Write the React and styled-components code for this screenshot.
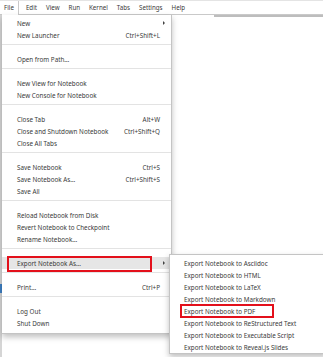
import styled, { createGlobalStyle } from 'styled-components';

const GlobalStyle = createGlobalStyle`
  html, body {
    margin: 0;
    padding: 0;
    background: #ffffff;
    overflow: hidden;
  }
  body {
    font-family: 'Noto Sans', 'Liberation Sans', Arial, sans-serif;
    color: #3a3a3a;
  }
`;

const Page = styled.div`
  position: relative;
  width: 323px;
  height: 357px;
  overflow: hidden;
  background: #ffffff;
`;

const MenuBar = styled.div`
  display: flex;
  align-items: stretch;
  height: 13px;
  border-top: 1px solid #e4e4e4;
  border-bottom: 1px solid #c9c9c9;
  font-size: 6.2px;
  line-height: 13px;
`;

const BarItem = styled.div`
  padding: ${(p) => (p.$active ? '0 4px 0 2px' : '0 4.5px')};
  margin-left: ${(p) => (p.$active ? '2px' : '0')};
  margin-right: ${(p) => (p.$active ? '2.5px' : '0')};
  border-right: ${(p) => (p.$active ? '1px solid #c9c9c9' : 'none')};
  background: #ffffff;
  margin-bottom: ${(p) => (p.$active ? '-1px' : '0')};
  white-space: nowrap;
`;

const Workspace = styled.div`
  display: flex;
  height: 343px;
`;

const SideStrip = styled.div`
  width: 2px;
  background: #d5d5d5;
  display: flex;
  flex-direction: column;
`;

const SideMark = styled.div`
  margin-top: 269px;
  height: 9px;
  background: #3d7fc4;
`;

const MainArea = styled.div`
  flex: 1;
  position: relative;
`;

const TabLine = styled.div`
  margin-left: 212px;
  height: 2px;
  background: #bdbdbd;
`;

const Dropdown = styled.div`
  position: absolute;
  left: 0;
  top: 0;
  width: 169px;
  background: #ffffff;
  border-right: 1px solid #c4c4c4;
  border-bottom: 1px solid #c4c4c4;
  box-shadow: 0 3px 6px rgba(0, 0, 0, 0.25);
  padding: 2px 0 4px;
  font-size: 6.3px;
`;

const Item = styled.div`
  position: relative;
  display: flex;
  align-items: center;
  justify-content: space-between;
  height: 12px;
  padding: 0 11px 0 15px;
  background: ${(p) => (p.$active ? '#e6e6e6' : 'transparent')};
  white-space: nowrap;
`;

const Shortcut = styled.span`
  color: #3a3a3a;
`;

const Arrow = styled.span`
  width: 0;
  height: 0;
  margin-right: -5px;
  border-left: 2.5px solid #444444;
  border-top: 2px solid transparent;
  border-bottom: 2px solid transparent;
`;

const Separator = styled.div`
  height: 1px;
  background: #e3e3e3;
  margin: 3px 0 8px;
`;

const Submenu = styled.div`
  position: absolute;
  left: 167px;
  top: -3px;
  width: 156px;
  background: #ffffff;
  border: 1px solid #c4c4c4;
  box-shadow: 0 3px 6px rgba(0, 0, 0, 0.25);
  padding: 2px 0 0;
  z-index: 2;
`;

const SubItem = styled.div`
  position: relative;
  display: flex;
  align-items: center;
  height: 12px;
  padding-left: 14px;
  white-space: nowrap;
`;

const RedBox = styled.div`
  position: absolute;
  left: ${(p) => p.$left}px;
  top: -1px;
  width: ${(p) => p.$width}px;
  height: ${(p) => p.$height}px;
  border: 2px solid #e3101b;
  box-sizing: border-box;
  pointer-events: none;
`;

const barItems = ['File', 'Edit', 'View', 'Run', 'Kernel', 'Tabs', 'Settings', 'Help'];

const groups = [
  [
    { label: 'New', submenu: true },
    { label: 'New Launcher', shortcut: 'Ctrl+Shift+L' },
  ],
  [{ label: 'Open from Path…' }],
  [{ label: 'New View for Notebook' }, { label: 'New Console for Notebook' }],
  [
    { label: 'Close Tab', shortcut: 'Alt+W' },
    { label: 'Close and Shutdown Notebook', shortcut: 'Ctrl+Shift+Q' },
    { label: 'Close All Tabs' },
  ],
  [
    { label: 'Save Notebook', shortcut: 'Ctrl+S' },
    { label: 'Save Notebook As…', shortcut: 'Ctrl+Shift+S' },
    { label: 'Save All' },
  ],
  [
    { label: 'Reload Notebook from Disk' },
    { label: 'Revert Notebook to Checkpoint' },
    { label: 'Rename Notebook…' },
  ],
  [{ label: 'Export Notebook As…', submenu: true, export: true }],
  [{ label: 'Print…', shortcut: 'Ctrl+P' }],
  [{ label: 'Log Out' }, { label: 'Shut Down' }],
];

const exportFormats = [
  'Asciidoc',
  'HTML',
  'LaTeX',
  'Markdown',
  'PDF',
  'ReStructured Text',
  'Executable Script',
  'Reveal.js Slides',
];

const ExportSubmenu = () => (
  <Submenu>
    {exportFormats.map((f) => (
      <SubItem key={f}>
        Export Notebook to {f}
        {f === 'PDF' && <RedBox $left={10} $width={94} $height={14} />}
      </SubItem>
    ))}
  </Submenu>
);

const App = () => {
  return (
    <Page>
      <GlobalStyle />
      <MenuBar>
        {barItems.map((name, i) => (
          <BarItem key={name} $active={i === 0}>
            {name}
          </BarItem>
        ))}
      </MenuBar>
      <Workspace>
        <SideStrip>
          <SideMark />
        </SideStrip>
        <MainArea>
          <TabLine />
          <Dropdown>
            {groups.map((group, gi) => (
              <div key={gi}>
                {gi > 0 && <Separator />}
                {group.map((item) => (
                  <Item key={item.label} $active={item.export}>
                    <span>{item.label}</span>
                    {item.shortcut && <Shortcut>{item.shortcut}</Shortcut>}
                    {item.submenu && <Arrow />}
                    {item.export && (
                      <>
                        <RedBox $left={5} $width={145} $height={16} />
                        <ExportSubmenu />
                      </>
                    )}
                  </Item>
                ))}
              </div>
            ))}
          </Dropdown>
        </MainArea>
      </Workspace>
    </Page>
  );
};

export default App;
